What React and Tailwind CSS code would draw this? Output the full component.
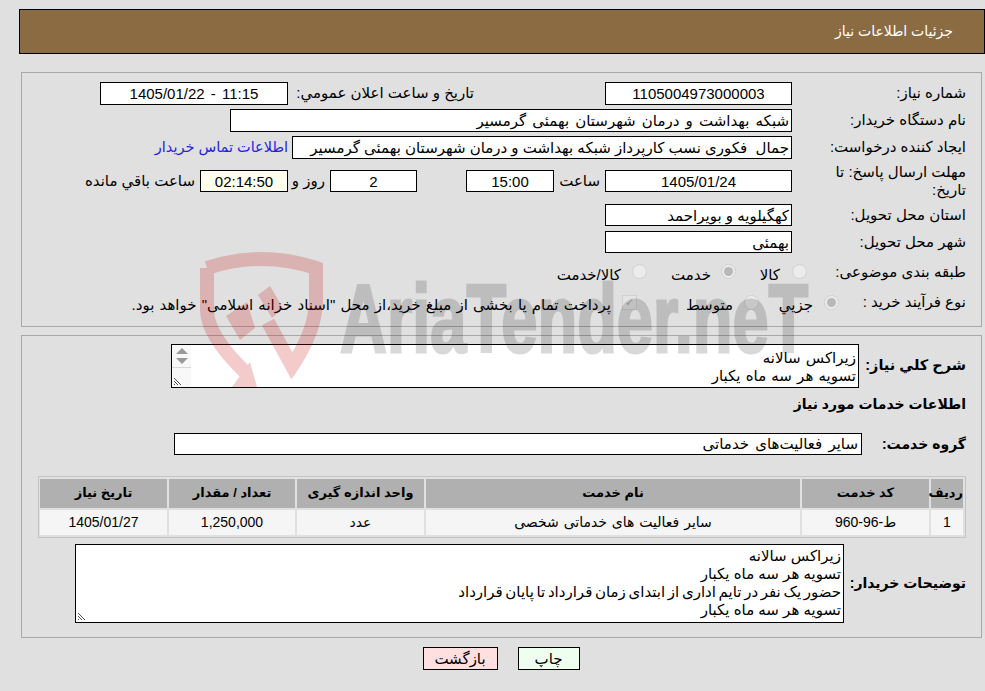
const FONT = "font-['Liberation_Sans','DejaVu_Sans',sans-serif]";

function Field({ children, className = '' }) {
  return (
    <div className={`h-[23px] border border-black bg-white text-center leading-[21px] whitespace-pre overflow-hidden ${className}`}>
      {children}
    </div>
  );
}

function Row({ label, labelClass = 'w-[174px]', children, className = '' }) {
  return (
    <div className={`flex items-center ${className}`}>
      <div className={`shrink-0 whitespace-nowrap ${labelClass}`}>{label}</div>
      {children}
    </div>
  );
}

function Radio({ checked, className = 'mb-[6px]' }) {
  return (
    <span className={`w-[15px] h-[15px] rounded-full border border-[#d0d0d0] bg-[#ececec] flex items-center justify-center shrink-0 ${className}`}>
      {checked && <span className="w-[9px] h-[9px] rounded-full bg-[#b8b8b8]" />}
    </span>
  );
}

function Grip() {
  return (
    <svg width="10" height="10" viewBox="0 0 10 10" className="absolute left-[1px] bottom-[1px]">
      <path d="M1 2l7 7M1 5l4 4M1 8l1 1" stroke="#555" strokeWidth="1" fill="none" />
    </svg>
  );
}

function Watermark() {
  return (
    <div className="absolute left-0 right-0 top-0 h-[387px] pointer-events-none overflow-hidden" dir="ltr">
      <svg width="985" height="387" viewBox="0 0 985 387" className="absolute left-0 top-0">
        <g opacity="0.2" fill="#cc0000">
          <path d="M207 268 Q262 250 316 268 V300 Q316 330 292 366 L268 322 M207 268 V310 Q207 335 245 372" fill="none" stroke="#cc0000" strokeWidth="14" />
          <path d="M232 387 L250 362 L257 387 Z" />
          <path d="M226 316 L247 302 L255 328 L240 340 Z" />
          <path d="M258 295 L270 286 L283 308 L272 318 Z" />
        </g>
      </svg>
      <div className="absolute left-[340px] top-[270px] text-[97px] leading-none font-bold text-black opacity-15 [-webkit-text-stroke:3px_black] font-['Liberation_Sans',sans-serif] origin-left scale-x-[0.67] whitespace-nowrap">
        AriaTender.neT
      </div>
    </div>
  );
}

export default function App() {
  return (
    <div dir="rtl" className={`relative w-[985px] h-[691px] overflow-hidden bg-[#e0e0e0] text-[15px] text-black ${FONT}`}>
      <div className="pt-[9px] pl-[19px]">
        <div className="h-[45px] bg-[#8b6b42] border border-black text-white flex items-center pr-[31px] text-[14px]">
          جزئیات اطلاعات نیاز
        </div>
      </div>

      {/* first panel */}
      <div className="ml-[21px] mr-[3px] mt-[18px] h-[255px] border border-[#a8a8a8] pt-[9px] pr-[15px] flex flex-col">
        <Row label="شماره نیاز:" className="h-[23px]">
          <Field className="w-[187px]">1105004973000003</Field>
          <div className="w-[186px] mr-[131px] whitespace-nowrap">تاریخ و ساعت اعلان عمومي:</div>
          <Field className="w-[188px]"><span dir="ltr" className="[word-spacing:2px]">1405/01/22 - 11:15</span></Field>
        </Row>
        <Row label="نام دستگاه خریدار:" className="h-[23px] mt-[4px]">
          <Field className="w-[562px] text-right pr-[2px] [word-spacing:2px]">شبکه بهداشت و درمان شهرستان بهمئی گرمسیر</Field>
        </Row>
        <Row label="ایجاد کننده درخواست:" className="h-[23px] mt-[4px]">
          <Field className="w-[500px] text-right pr-[2px]">جمال  فکوری نسب کارپرداز شبکه بهداشت و درمان شهرستان بهمئی گرمسیر</Field>
          <span className="mr-[4px] text-[14.5px] text-[#1f1fe0] whitespace-nowrap">اطلاعات تماس خریدار</span>
        </Row>
        <Row label={<>مهلت ارسال پاسخ: تا<br />تاریخ:</>} labelClass="w-[174px] leading-[18px]" className="h-[36px] mt-[4px]">
          <Field className="w-[187px] !h-[22px]">1405/01/24</Field>
          <span className="w-[51px] pr-[5px]">ساعت</span>
          <Field className="w-[88px] !h-[22px]">15:00</Field>
          <span className="w-[49px]" />
          <Field className="w-[87px] !h-[22px]">2</Field>
          <span className="w-[42px] pr-[5px] whitespace-nowrap">روز و</span>
          <Field className="w-[88px] !h-[22px] !bg-[#ffffee]">02:14:50</Field>
          <span className="pr-[5px] whitespace-nowrap">ساعت باقي مانده</span>
        </Row>
        <Row label="استان محل تحویل:" className="h-[22px] mt-[5px]">
          <Field className="w-[187px] !h-[22px] text-right pr-[2px]">کهگیلویه و بویراحمد</Field>
        </Row>
        <Row label="شهر محل تحویل:" className="h-[22px] mt-[5px]">
          <Field className="w-[187px] !h-[22px] text-right pr-[2px]">بهمئی</Field>
        </Row>
        <Row label="طبقه بندی موضوعی:" labelClass="w-[159px] mb-[5px]" className="h-[22px] mt-[11px]">
          <Radio className="mb-[8px]" />
          <span className="w-[56px] pr-[12px]">کالا</span>
          <Radio checked className="mb-[8px]" />
          <span className="w-[74px] pr-[10px]">خدمت</span>
          <Radio className="mb-[8px]" />
          <span className="pr-[11px] whitespace-nowrap">کالا/خدمت</span>
        </Row>
        <Row label="نوع فرآیند خرید :" labelClass="w-[127px] mb-[5px]" className="h-[22px] mt-[8px]">
          <Radio checked />
          <span className="w-[65px] pr-[11px]">جزیي</span>
          <Radio />
          <span className="w-[107px] pr-[11px]">متوسط</span>
          <span className="w-[15px] h-[15px] mb-[6px] border border-[#d0d0d0] bg-[#e4e4e4] shrink-0 flex items-center justify-center text-[#aaa] text-[11px]">✓</span>
          <span className="pr-[11px] whitespace-nowrap [word-spacing:1px]">پرداخت تمام یا بخشی از مبلغ خرید،از محل "اسناد خزانه اسلامی" خواهد بود.</span>
        </Row>
      </div>

      {/* second panel */}
      <div className="ml-[21px] mr-[3px] mt-[8px] h-[303px] border border-[#a8a8a8] pr-[15px] pt-[8px] flex flex-col">
        <div className="flex items-center h-[44px]">
          <div className="w-[107px] shrink-0 font-bold text-[14.5px] whitespace-nowrap">شرح کلي نیاز:</div>
          <div className="relative w-[688px] h-[44px] border border-black bg-white pr-[2px] leading-[18px] pt-[4px] [word-spacing:1px]">
            <div>زیراکس سالانه</div>
            <div>تسویه هر سه ماه یکبار</div>
            <div className="absolute left-0 top-0 bottom-0 w-[19px] bg-[#f8f8f8] flex flex-col">
              <div className="h-[23px] border-b border-[#d8d8d8] flex flex-col items-center pt-[3px] gap-[4px]">
                <span className="w-0 h-0 border-x-[6px] border-x-transparent border-b-[6px] border-b-[#9a9a9a]" />
                <span className="w-0 h-0 border-x-[6px] border-x-transparent border-t-[6px] border-t-[#9a9a9a]" />
              </div>
            </div>
            <Grip />
          </div>
        </div>
        <div className="font-bold text-[14px] h-[20px] mt-[6px] leading-[20px]">اطلاعات خدمات مورد نیاز</div>
        <div className="flex items-center h-[22px] mt-[19px]">
          <div className="w-[104px] shrink-0 font-bold text-[14px] whitespace-nowrap">گروه خدمت:</div>
          <div className="w-[688px] h-[22px] border border-black bg-white pr-[3px] leading-[20px] [word-spacing:2px]">سایر فعالیت‌های خدماتی</div>
        </div>
        <div className="mt-[21px] ml-[16px] border border-[#c4c4c4] p-[2px] text-[14px]">
          <div className="grid grid-cols-[32px_127px_374px_127px_126px_127px] gap-[2px] text-center">
            {['ردیف', 'کد خدمت', 'نام خدمت', 'واحد اندازه گیری', 'تعداد / مقدار', 'تاریخ نیاز'].map((h) => (
              <div key={h} className="h-[29px] bg-[#b0b0b0] font-bold text-[13px] leading-[28px] whitespace-nowrap">{h}</div>
            ))}
            {['1', 'ط-96-960', 'سایر فعالیت های خدماتی شخصی', 'عدد', '1,250,000', '1405/01/27'].map((c, i) => (
              <div key={i} className="h-[25px] bg-[#f5f5f5] leading-[25px] [word-spacing:1px]">{c}</div>
            ))}
          </div>
        </div>
        <div className="flex items-center mt-[6px] h-[79px]">
          <div className="w-[122px] shrink-0 font-bold text-[14px] whitespace-nowrap">توضیحات خریدار:</div>
          <div className="relative w-[769px] h-[79px] border border-black bg-white pr-[2px] pt-[2px] leading-[18px]">
            <div>زیراکس سالانه</div>
            <div>تسویه هر سه ماه یکبار</div>
            <div className="[word-spacing:-1.5px]">حضور یک نفر در تایم اداری از ابتدای زمان قرارداد تا پایان قرارداد</div>
            <div>تسویه هر سه ماه یکبار</div>
            <Grip />
          </div>
        </div>
      </div>

      <div className="flex justify-center gap-[20px] mt-[9px] pl-[17px]">
        <button className="w-[62px] h-[23px] border border-black bg-[#efffef] leading-[20px]">چاپ</button>
        <button className="w-[75px] h-[23px] border border-black bg-[#ffdfdf] leading-[20px]">بازگشت</button>
      </div>

      <Watermark />
    </div>
  );
}
